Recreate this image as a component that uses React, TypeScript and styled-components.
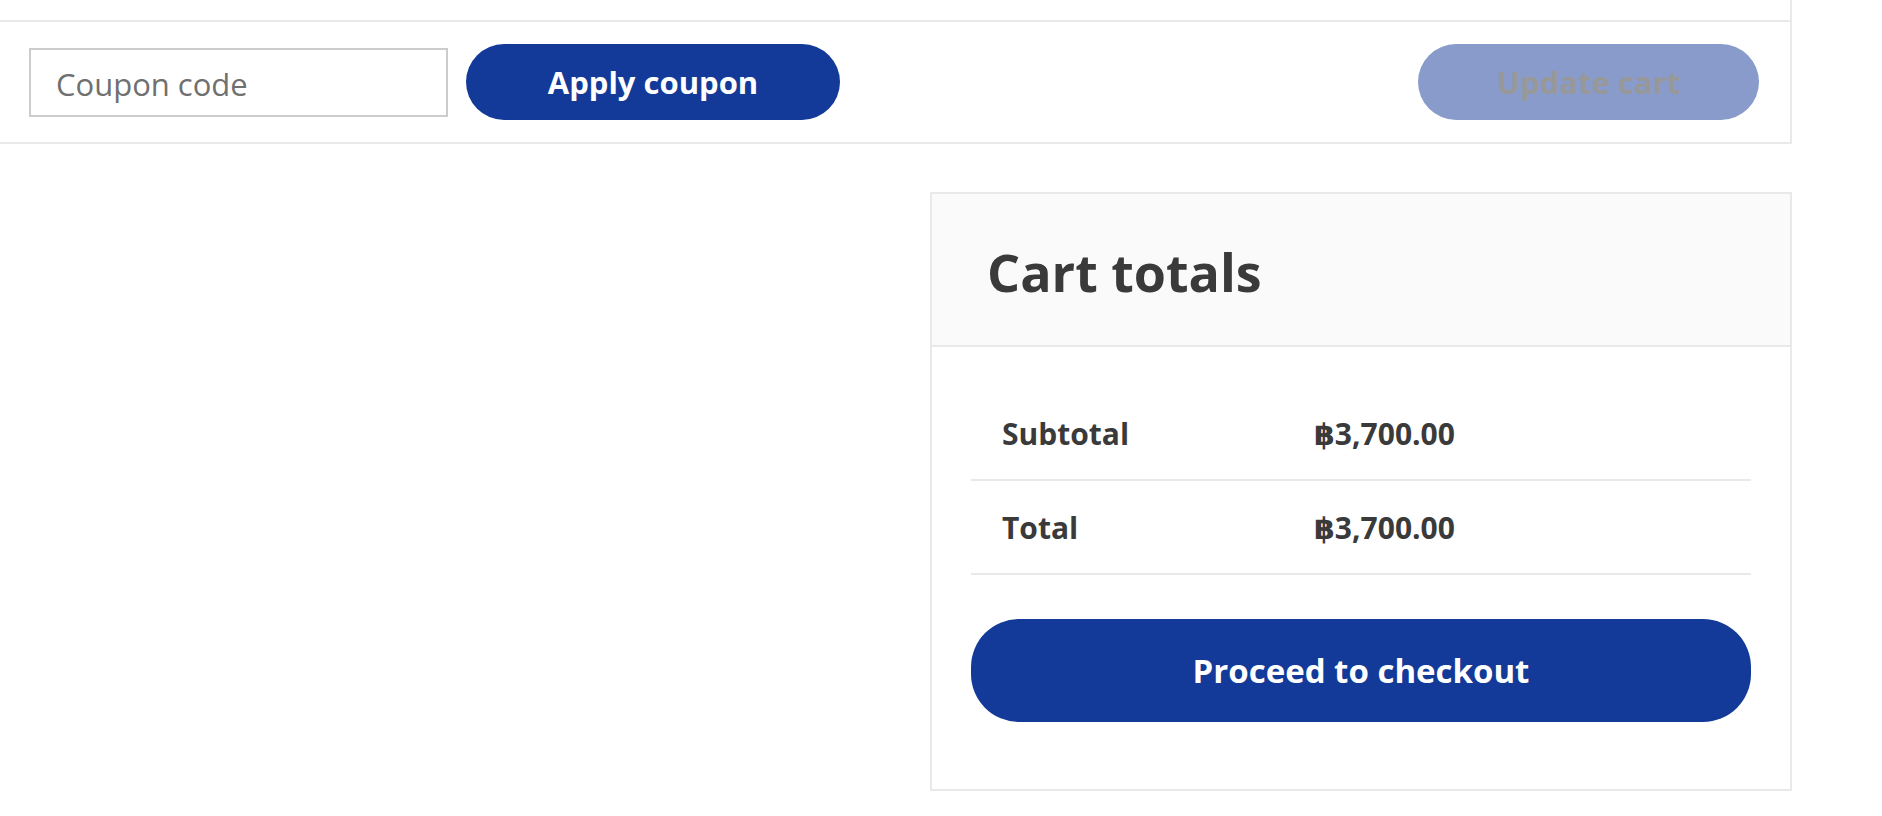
import React from "react";
import styled, { createGlobalStyle } from "styled-components";

const GlobalStyle = createGlobalStyle`
  html, body {
    margin: 0;
    padding: 0;
    background: #ffffff;
  }
  body {
    font-family: "Open Sans", "DejaVu Sans", sans-serif;
    color: #3a3a3a;
  }
  * { box-sizing: border-box; }
`;

const LINE = "#e9e9e9";
const BLUE = "#133a99";

const Page = styled.div`
  width: 1882px;
  min-height: 816px;
  padding-right: 90px;
  display: flex;
  flex-direction: column;
`;

const PrevRow = styled.div`
  height: 20px;
  border-right: 2px solid ${LINE};
`;

const CouponRow = styled.div`
  height: 124px;
  border-top: 2px solid ${LINE};
  border-bottom: 2px solid ${LINE};
  border-right: 2px solid ${LINE};
  display: flex;
  align-items: center;
  justify-content: space-between;
  padding: 0 31px 0 29px;
`;

const CouponGroup = styled.div`
  display: flex;
  align-items: center;
  gap: 18px;
`;

const CouponInput = styled.input`
  width: 419px;
  height: 69px;
  border: 2px solid #cccccc;
  padding: 3px 0 0 25px;
  font-family: "Open Sans", sans-serif;
  font-size: 31px;
  color: #3a3a3a;
  outline: none;
  background: #fff;
  &::placeholder {
    color: #707070;
    opacity: 1;
  }
`;

const PillButton = styled.button<{ $w?: number; $h: number; $r: number; $fs: number; $disabled?: boolean }>`
  width: ${(p) => (p.$w ? `${p.$w}px` : "100%")};
  height: ${(p) => p.$h}px;
  border-radius: ${(p) => p.$r}px;
  border: none;
  background: ${BLUE};
  color: ${(p) => (p.$disabled ? "#333333" : "#ffffff")};
  opacity: ${(p) => (p.$disabled ? 0.5 : 1)};
  font-family: "Open Sans", sans-serif;
  font-weight: 700;
  font-size: ${(p) => p.$fs}px;
  line-height: 1;
  display: flex;
  align-items: center;
  justify-content: center;
  padding: 0;
  cursor: pointer;
`;

const Collaterals = styled.div`
  display: flex;
  justify-content: flex-end;
  margin-top: 48px;
`;

const TotalsBox = styled.div`
  width: 862px;
  border: 2px solid ${LINE};
  display: flex;
  flex-direction: column;
`;

const TotalsHeader = styled.div`
  height: 153px;
  background: #fafafa;
  border-bottom: 2px solid ${LINE};
  display: flex;
  align-items: center;
  padding-left: 55px;
`;

const Heading = styled.h2`
  margin: 0;
  font-family: "Open Sans", sans-serif;
  font-weight: 700;
  font-size: 52px;
  color: #3a3a3a;
  line-height: 1;
  padding-top: 4px;
`;

const TotalsBody = styled.div`
  padding: 40px 39px 67px 39px;
  display: flex;
  flex-direction: column;
`;

const TotalRow = styled.div`
  display: grid;
  grid-template-columns: 343px 1fr;
  align-items: center;
  height: 94px;
  border-bottom: 2px solid ${LINE};
`;

const Label = styled.div`
  padding-left: 31px;
  font-weight: 700;
  font-size: 30px;
  color: #3a3a3a;
`;

const Amount = styled.div`
  font-weight: 700;
  font-size: 30px;
  color: #3a3a3a;
`;

const CheckoutWrap = styled.div`
  margin-top: 44px;
`;

export default function App() {
  return (
    <>
      <GlobalStyle />
      <Page>
        <PrevRow />
        <CouponRow>
          <CouponGroup>
            <CouponInput placeholder="Coupon code" />
            <PillButton $w={374} $h={76} $r={38} $fs={31}>
              Apply coupon
            </PillButton>
          </CouponGroup>
          <PillButton $w={341} $h={76} $r={38} $fs={31} $disabled>
            Update cart
          </PillButton>
        </CouponRow>
        <Collaterals>
          <TotalsBox>
            <TotalsHeader>
              <Heading>Cart totals</Heading>
            </TotalsHeader>
            <TotalsBody>
              <TotalRow>
                <Label>Subtotal</Label>
                <Amount>฿3,700.00</Amount>
              </TotalRow>
              <TotalRow>
                <Label>Total</Label>
                <Amount>฿3,700.00</Amount>
              </TotalRow>
              <CheckoutWrap>
                <PillButton $h={103} $r={48} $fs={33}>
                  Proceed to checkout
                </PillButton>
              </CheckoutWrap>
            </TotalsBody>
          </TotalsBox>
        </Collaterals>
      </Page>
    </>
  );
}
